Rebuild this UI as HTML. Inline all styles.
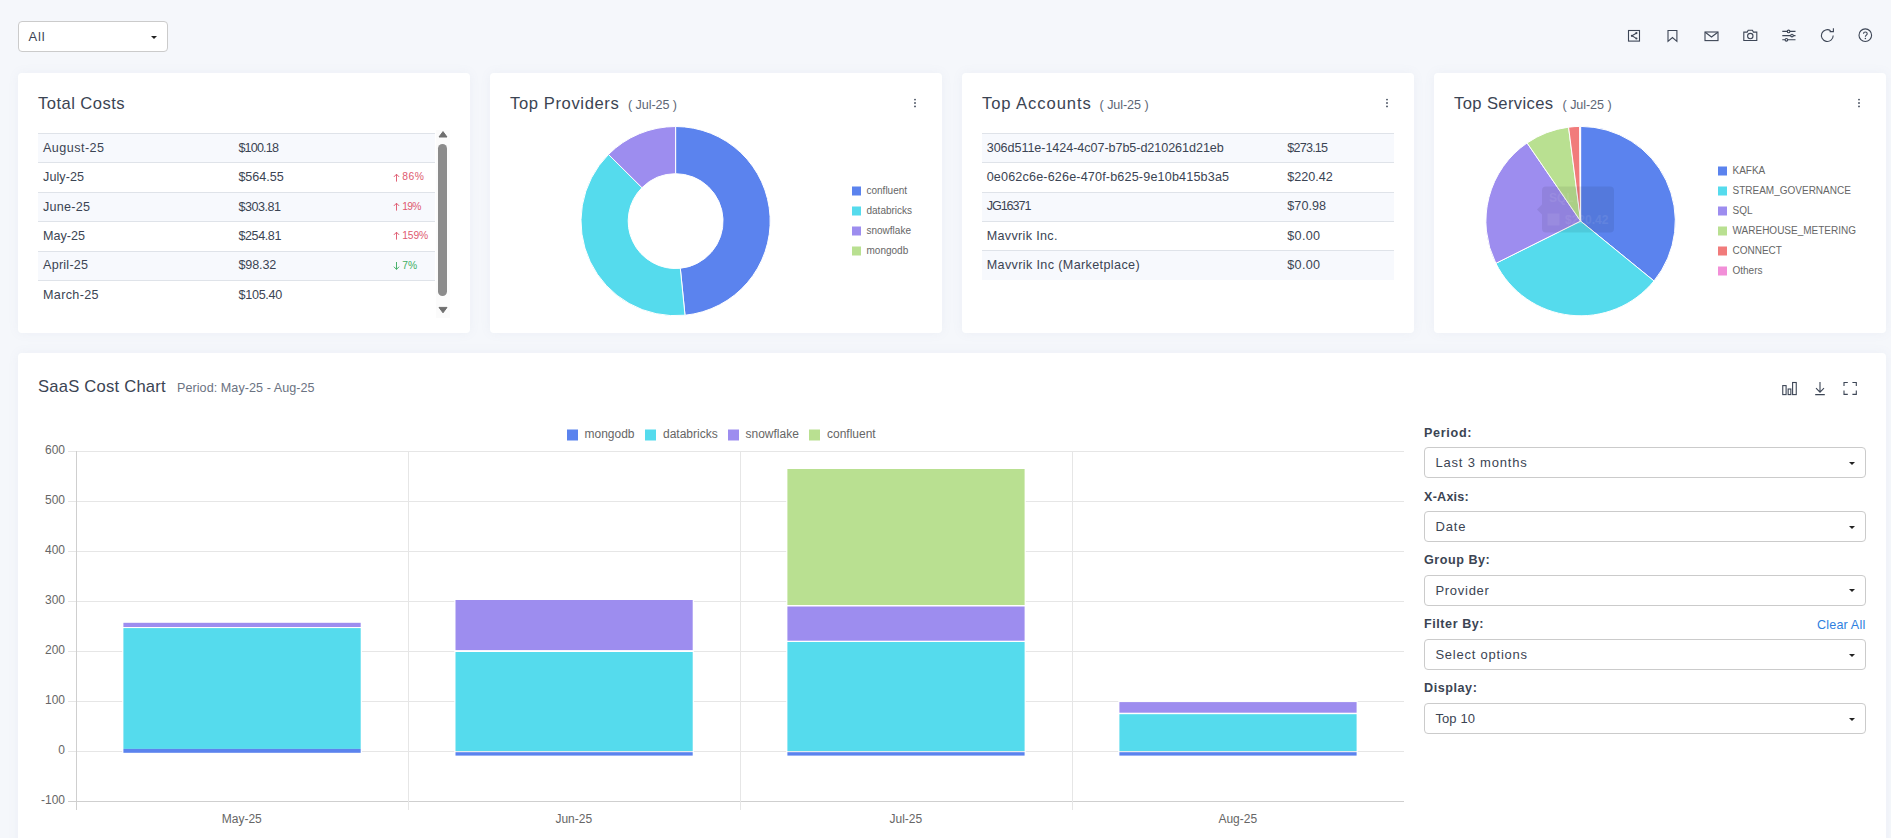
<!DOCTYPE html>
<html><head><meta charset="utf-8"><title>SaaS Costs</title>
<style>
*{box-sizing:border-box;margin:0;padding:0}
html,body{width:1891px;height:838px;overflow:hidden;background:#f5f7fb;font-family:"Liberation Sans",sans-serif;color:#3b4453}
.abs{position:absolute}
.card{position:absolute;background:#fff;border-radius:4px;box-shadow:0 0 11px rgba(125,140,175,0.075)}
.h{position:absolute;font-size:16.6px;line-height:20px;color:#3b4453;white-space:nowrap}
.sub{position:absolute;font-size:12.6px;line-height:16px;color:#5d6675;white-space:nowrap}
.row{position:absolute;height:29.4px;border-top:1px solid #dfe3e9}
.row.odd{background:#f7f9fd}
.c{position:absolute;top:-0.3px;line-height:28.4px;font-size:12.6px;color:#3b4453;white-space:nowrap}
.pct{position:absolute;top:0;height:28.4px;line-height:28.4px;font-size:10.3px;white-space:nowrap}
.pct .ar{font-style:normal;font-size:11px;margin-right:1px}
.up{color:#de5a70} .dn{color:#3fae63}
.ct{font-family:"Liberation Sans",sans-serif;font-size:12px;fill:#666}
.lt{font-family:"Liberation Sans",sans-serif;font-size:10px;fill:#666}
.sel{position:absolute;background:#fff;border:1px solid #cbcbcb;border-radius:4px}
.st{position:absolute;top:0;bottom:0;display:flex;align-items:center;font-size:13px;color:#3b4453;white-space:nowrap}
.caret{position:absolute;right:10px;top:50%;margin-top:-1px;border-left:3.5px solid transparent;border-right:3.5px solid transparent;border-top:3.5px solid #222}
.lab{position:absolute;font-size:12.6px;font-weight:bold;color:#3b4453;white-space:nowrap;line-height:16px}
</style></head><body>

<!-- top bar -->
<div class="sel" style="left:18px;top:21px;width:150px;height:31px"><span class="st" style="left:9.6px"><span style="letter-spacing:0.775px;">All</span></span><i class="caret"></i></div>
<svg class="abs" style="left:1626px;top:28px" width="16" height="16" viewBox="0 0 16 16"><rect x="2.5" y="2.5" width="11" height="10.6" stroke="#3d4656" fill="none" stroke-width="1.1"/><path d="M10.2 5.2L6 7.8L10.2 10.4" stroke="#3d4656" fill="none" stroke-width="1.1"/><circle cx="10.4" cy="5.1" r="1.1" fill="#3d4656"/><circle cx="5.9" cy="7.8" r="1.1" fill="#3d4656"/><circle cx="10.4" cy="10.5" r="1.1" fill="#3d4656"/></svg><svg class="abs" style="left:1664px;top:28px" width="16" height="16" viewBox="0 0 16 16"><path d="M4 2.5H12.9V13.3L8.45 9.5L4 13.3Z" stroke="#3d4656" fill="none" stroke-width="1.1" stroke-linejoin="miter"/></svg><svg class="abs" style="left:1703px;top:28px" width="17" height="16" viewBox="0 0 17 16"><rect x="2" y="4" width="13" height="8.6" stroke="#3d4656" fill="none" stroke-width="1.1"/><path d="M2.2 4.3L8.5 9L14.8 4.3" stroke="#3d4656" fill="none" stroke-width="1.1"/></svg><svg class="abs" style="left:1742px;top:28px" width="17" height="16" viewBox="0 0 17 16"><path d="M1.8 4.1H5.2L6.2 2.3H10.4L11.4 4.1H14.8V12.5H1.8Z" stroke="#3d4656" fill="none" stroke-width="1.1"/><circle cx="8.3" cy="8.1" r="2.7" stroke="#3d4656" fill="none" stroke-width="1.1"/></svg><svg class="abs" style="left:1781px;top:28px" width="16" height="16" viewBox="0 0 16 16"><path d="M1.3 3.4H14.5M1.3 7.6H14.5M1.3 11.8H14.5" stroke="#3d4656" fill="none" stroke-width="1.1"/><circle cx="7.6" cy="3.4" r="1.3" fill="#f5f7fb" stroke="#3d4656"  stroke-width="1.1"/><circle cx="11" cy="7.6" r="1.3" fill="#f5f7fb" stroke="#3d4656"  stroke-width="1.1"/><circle cx="5.4" cy="11.8" r="1.3" fill="#f5f7fb" stroke="#3d4656"  stroke-width="1.1"/></svg><svg class="abs" style="left:1819px;top:27px" width="17" height="17" viewBox="0 0 17 17"><path d="M14.2 8.6A5.9 5.9 0 1 1 11.6 3.7" stroke="#3d4656" fill="none" stroke-width="1.1"/><path d="M10.6 4.6H14.4V1.2" stroke="#3d4656" fill="none" stroke-width="1.1"/></svg><svg class="abs" style="left:1857px;top:27px" width="17" height="17" viewBox="0 0 17 17"><circle cx="8.3" cy="8.2" r="6.3" stroke="#3d4656" fill="none" stroke-width="1.1"/><path d="M6.5 6.7C6.5 4.5 10.2 4.5 10.2 6.7C10.2 8 8.35 8.2 8.35 9.7" stroke="#3d4656" fill="none" stroke-width="1.1"/><circle cx="8.35" cy="11.4" r="0.75" fill="#3d4656"/></svg>

<!-- cards -->
<div class="card" style="left:18px;top:73px;width:452px;height:260px"></div>
<div class="card" style="left:490px;top:73px;width:452px;height:260px"></div>
<div class="card" style="left:962px;top:73px;width:452px;height:260px"></div>
<div class="card" style="left:1434px;top:73px;width:452px;height:260px"></div>
<div class="card" style="left:18px;top:353px;width:1868px;height:500px"></div>

<!-- Total Costs -->
<div class="h" style="left:38px;top:94px"><span style="letter-spacing:0.449px;">Total Costs</span></div>
<div class="row odd" style="left:38px;top:133.0px;width:397px"><span class="c" style="left:5px"><span style="letter-spacing:0.458px;">August-25</span></span><span class="c" style="left:200.4px"><span style="letter-spacing:-0.824px;">$100.18</span></span></div><div class="row" style="left:38px;top:162.4px;width:397px"><span class="c" style="left:5px"><span style="letter-spacing:0.080px;">July-25</span></span><span class="c" style="left:200.4px"><span style="letter-spacing:-0.024px;">$564.55</span></span><span class="pct" style="left:355px;width:40px;color:#de5a70"><svg style="position:absolute;left:0;top:9.2px" width="7" height="10" viewBox="0 0 7 10"><path d="M3.5 8.6V1.2M0.9 3.9L3.5 1.2L6.1 3.9" fill="none" stroke="#de5a70" stroke-width="0.95"/></svg><span style="position:absolute;left:9.2px;top:0"><span style="letter-spacing:0.592px;">86%</span></span></span></div><div class="row odd" style="left:38px;top:191.8px;width:397px"><span class="c" style="left:5px"><span style="letter-spacing:0.261px;">June-25</span></span><span class="c" style="left:200.4px"><span style="letter-spacing:-0.474px;">$303.81</span></span><span class="pct" style="left:355px;width:40px;color:#de5a70"><svg style="position:absolute;left:0;top:9.2px" width="7" height="10" viewBox="0 0 7 10"><path d="M3.5 8.6V1.2M0.9 3.9L3.5 1.2L6.1 3.9" fill="none" stroke="#de5a70" stroke-width="0.95"/></svg><span style="position:absolute;left:9.2px;top:0"><span style="letter-spacing:-0.658px;">19%</span></span></span></div><div class="row" style="left:38px;top:221.2px;width:397px"><span class="c" style="left:5px"><span style="letter-spacing:0.017px;">May-25</span></span><span class="c" style="left:200.4px"><span style="letter-spacing:-0.408px;">$254.81</span></span><span class="pct" style="left:355px;width:40px;color:#de5a70"><svg style="position:absolute;left:0;top:9.2px" width="7" height="10" viewBox="0 0 7 10"><path d="M3.5 8.6V1.2M0.9 3.9L3.5 1.2L6.1 3.9" fill="none" stroke="#de5a70" stroke-width="0.95"/></svg><span style="position:absolute;left:9.2px;top:0"><span style="letter-spacing:-0.082px;">159%</span></span></span></div><div class="row odd" style="left:38px;top:250.6px;width:397px"><span class="c" style="left:5px"><span style="letter-spacing:0.240px;">April-25</span></span><span class="c" style="left:200.4px"><span style="letter-spacing:-0.128px;">$98.32</span></span><span class="pct" style="left:355px;width:40px;color:#3fae63"><svg style="position:absolute;left:0;top:9.2px" width="7" height="10" viewBox="0 0 7 10"><path d="M3.5 1V8.4M0.9 5.7L3.5 8.4L6.1 5.7" fill="none" stroke="#3fae63" stroke-width="0.95"/></svg><span style="position:absolute;left:9.2px;top:0"><span style="letter-spacing:0.013px;">7%</span></span></span></div><div class="row" style="left:38px;top:280.0px;width:397px"><span class="c" style="left:5px"><span style="letter-spacing:0.340px;">March-25</span></span><span class="c" style="left:200.4px"><span style="letter-spacing:-0.258px;">$105.40</span></span></div>
<div class="abs" style="left:436px;top:130px;width:14px;height:188px;background:#fbfbfb"></div>
<div class="abs" style="left:438.4px;top:144px;width:8.6px;height:151.6px;border-radius:5px;background:#8b8b8b"></div>
<svg class="abs" style="left:437px;top:129px" width="12" height="10" viewBox="0 0 12 10"><path d="M2 8L6 2.6L10 8Z" fill="#6e6e6e" stroke="#6e6e6e" stroke-linejoin="round" stroke-width="1"/></svg>
<svg class="abs" style="left:437px;top:305px" width="12" height="10" viewBox="0 0 12 10"><path d="M2 2.4L6 7.8L10 2.4Z" fill="#6e6e6e" stroke="#6e6e6e" stroke-linejoin="round" stroke-width="1"/></svg>

<!-- Top Providers -->
<div class="h" style="left:510px;top:94px"><span style="letter-spacing:0.609px;">Top Providers</span></div>
<div class="sub" style="left:628px;top:97px"><span style="letter-spacing:-0.079px;">( Jul-25 )</span></div>
<svg class="abs" style="left:912px;top:97px" width="6" height="12" viewBox="0 0 6 12"><circle cx="3" cy="2.6" r="0.95" fill="#4a5363"/><circle cx="3" cy="6" r="0.95" fill="#4a5363"/><circle cx="3" cy="9.4" r="0.95" fill="#4a5363"/></svg>

<!-- Top Accounts -->
<div class="h" style="left:982px;top:94px"><span style="letter-spacing:0.915px;">Top Accounts</span></div>
<div class="sub" style="left:1099.6px;top:97px"><span style="letter-spacing:-0.079px;">( Jul-25 )</span></div>
<svg class="abs" style="left:1384px;top:97px" width="6" height="12" viewBox="0 0 6 12"><circle cx="3" cy="2.6" r="0.95" fill="#4a5363"/><circle cx="3" cy="6" r="0.95" fill="#4a5363"/><circle cx="3" cy="9.4" r="0.95" fill="#4a5363"/></svg>
<div class="row odd" style="left:982px;top:133.0px;width:412px"><span class="c" style="left:4.7px"><span style="letter-spacing:-0.062px;">306d511e-1424-4c07-b7b5-d210261d21eb</span></span><span class="c" style="left:305.3px"><span style="letter-spacing:-0.791px;">$273.15</span></span></div><div class="row" style="left:982px;top:162.3px;width:412px"><span class="c" style="left:4.7px"><span style="letter-spacing:0.162px;">0e062c6e-626e-470f-b625-9e10b415b3a5</span></span><span class="c" style="left:305.3px"><span style="letter-spacing:-0.008px;">$220.42</span></span></div><div class="row odd" style="left:982px;top:191.6px;width:412px"><span class="c" style="left:4.7px"><span style="letter-spacing:-1.056px;">JG16371</span></span><span class="c" style="left:305.3px"><span style="letter-spacing:0.052px;">$70.98</span></span></div><div class="row" style="left:982px;top:220.9px;width:412px"><span class="c" style="left:4.7px"><span style="letter-spacing:0.326px;">Mavvrik Inc.</span></span><span class="c" style="left:305.3px"><span style="letter-spacing:0.317px;">$0.00</span></span></div><div class="row odd" style="left:982px;top:250.2px;width:412px"><span class="c" style="left:4.7px"><span style="letter-spacing:0.365px;">Mavvrik Inc (Marketplace)</span></span><span class="c" style="left:305.3px"><span style="letter-spacing:0.317px;">$0.00</span></span></div>

<!-- Top Services -->
<div class="h" style="left:1454px;top:94px"><span style="letter-spacing:0.379px;">Top Services</span></div>
<div class="sub" style="left:1562.6px;top:97px"><span style="letter-spacing:-0.079px;">( Jul-25 )</span></div>
<svg class="abs" style="left:1856px;top:97px" width="6" height="12" viewBox="0 0 6 12"><circle cx="3" cy="2.6" r="0.95" fill="#4a5363"/><circle cx="3" cy="6" r="0.95" fill="#4a5363"/><circle cx="3" cy="9.4" r="0.95" fill="#4a5363"/></svg>

<!-- SaaS Cost Chart header -->
<div class="h" style="left:38px;top:377px"><span style="letter-spacing:0.225px;">SaaS Cost Chart</span></div>
<div class="sub" style="left:177px;top:380px;color:#6b7382"><span style="letter-spacing:0.051px;">Period: May-25 - Aug-25</span></div>
<svg class="abs" style="left:1781px;top:380px" width="17" height="17" viewBox="0 0 17 17"><rect x="1.75" y="5.6" width="3.35" height="9" stroke="#3d4656" fill="none" stroke-width="1.1"/><rect x="7.15" y="9" width="2.7" height="5.6" stroke="#3d4656" fill="none" stroke-width="1.1"/><rect x="11.6" y="2.5" width="3.65" height="12.1" stroke="#3d4656" fill="none" stroke-width="1.1"/></svg><svg class="abs" style="left:1812px;top:380px" width="17" height="17" viewBox="0 0 17 17"><path d="M8 2V12M4 8.2L8 12.2L12 8.2M3.2 14.6H12.8" stroke="#3d4656" fill="none" stroke-width="1.1"/></svg><svg class="abs" style="left:1842px;top:380px" width="17" height="17" viewBox="0 0 17 17"><path d="M2 6V2.5H5.8M10.4 2.5H14.3V6M14.3 10.6V14.4H10.4M5.8 14.4H2V10.6" stroke="#3d4656" fill="none" stroke-width="1.1"/></svg>

<!-- all chart graphics -->
<svg class="abs" style="left:0;top:0" width="1891" height="838" viewBox="0 0 1891 838">
<path d="M675.60 126.50A94.6 94.6 0 0 1 685.00 315.23L680.31 268.27A47.4 47.4 0 0 0 675.60 173.70Z" fill="#5b83ee" stroke="#fff" stroke-width="1.0" stroke-linejoin="round"/><path d="M685.00 315.23A94.6 94.6 0 0 1 608.47 154.44L641.97 187.70A47.4 47.4 0 0 0 680.31 268.27Z" fill="#55dbed" stroke="#fff" stroke-width="1.0" stroke-linejoin="round"/><path d="M608.47 154.44A94.6 94.6 0 0 1 675.60 126.50L675.60 173.70A47.4 47.4 0 0 0 641.97 187.70Z" fill="#9d8def" stroke="#fff" stroke-width="1.0" stroke-linejoin="round"/>
<rect x="852" y="186.5" width="9" height="9" fill="#5b83ee"/><text x="866.5" y="194.4" class="lt">confluent</text><rect x="852" y="206.5" width="9" height="9" fill="#55dbed"/><text x="866.5" y="214.4" class="lt">databricks</text><rect x="852" y="226.5" width="9" height="9" fill="#9d8def"/><text x="866.5" y="234.4" class="lt">snowflake</text><rect x="852" y="246.5" width="9" height="9" fill="#b9e091"/><text x="866.5" y="254.4" class="lt">mongodb</text>
<path d="M1580.60 221.10L1580.60 126.40A94.7 94.7 0 0 1 1653.99 280.95Z" fill="#5b83ee" stroke="#fff" stroke-width="1.0" stroke-linejoin="round"/><path d="M1580.60 221.10L1653.99 280.95A94.7 94.7 0 0 1 1495.85 263.35Z" fill="#55dbed" stroke="#fff" stroke-width="1.0" stroke-linejoin="round"/><path d="M1580.60 221.10L1495.85 263.35A94.7 94.7 0 0 1 1527.10 142.96Z" fill="#9d8def" stroke="#fff" stroke-width="1.0" stroke-linejoin="round"/><path d="M1580.60 221.10L1527.10 142.96A94.7 94.7 0 0 1 1568.57 127.17Z" fill="#b9e091" stroke="#fff" stroke-width="1.0" stroke-linejoin="round"/><path d="M1580.60 221.10L1568.57 127.17A94.7 94.7 0 0 1 1579.61 126.41Z" fill="#f17b7b" stroke="#fff" stroke-width="1.0" stroke-linejoin="round"/><path d="M1580.60 221.10L1579.61 126.41A94.7 94.7 0 0 1 1580.60 126.40Z" fill="#f28fd8" stroke="#fff" stroke-width="1.0" stroke-linejoin="round"/>
<rect x="1718" y="166.5" width="9" height="9" fill="#5b83ee"/><text x="1732.5" y="174.4" class="lt">KAFKA</text><rect x="1718" y="186.5" width="9" height="9" fill="#55dbed"/><text x="1732.5" y="194.4" class="lt">STREAM_GOVERNANCE</text><rect x="1718" y="206.5" width="9" height="9" fill="#9d8def"/><text x="1732.5" y="214.4" class="lt">SQL</text><rect x="1718" y="226.5" width="9" height="9" fill="#b9e091"/><text x="1732.5" y="234.4" class="lt">WAREHOUSE_METERING</text><rect x="1718" y="246.5" width="9" height="9" fill="#f17b7b"/><text x="1732.5" y="254.4" class="lt">CONNECT</text><rect x="1718" y="266.5" width="9" height="9" fill="#f28fd8"/><text x="1732.5" y="274.4" class="lt">Others</text>
<g opacity="0.075"><path d="M1546 186.5h64a4 4 0 0 1 4 4v38a4 4 0 0 1 -4 4h-64a4 4 0 0 1 -4 -4v-14l-5 -5l5 -5v-14a4 4 0 0 1 4 -4Z" fill="#000"/></g>
<g opacity="0.075"><text x="1549" y="202" font-family="Liberation Sans" font-weight="bold" font-size="12" fill="#fff">SQL</text><rect x="1547.5" y="213.5" width="12" height="12" fill="#fff"/><text x="1565" y="224" font-family="Liberation Sans" font-weight="bold" font-size="12" fill="#fff">$220.42</text></g>
<line x1="68" x2="1404" y1="451.5" y2="451.5" stroke="#e6e6e6" stroke-width="1"/><line x1="68" x2="1404" y1="501.5" y2="501.5" stroke="#e6e6e6" stroke-width="1"/><line x1="68" x2="1404" y1="551.5" y2="551.5" stroke="#e6e6e6" stroke-width="1"/><line x1="68" x2="1404" y1="601.5" y2="601.5" stroke="#e6e6e6" stroke-width="1"/><line x1="68" x2="1404" y1="651.5" y2="651.5" stroke="#e6e6e6" stroke-width="1"/><line x1="68" x2="1404" y1="701.5" y2="701.5" stroke="#e6e6e6" stroke-width="1"/><line x1="68" x2="1404" y1="751.5" y2="751.5" stroke="#e6e6e6" stroke-width="1"/><line x1="68" x2="1404" y1="801.5" y2="801.5" stroke="#cfcfcf" stroke-width="1"/><line x1="76.5" x2="76.5" y1="451" y2="810" stroke="#cfcfcf" stroke-width="1"/><line x1="408.5" x2="408.5" y1="451" y2="810" stroke="#e6e6e6" stroke-width="1"/><line x1="740.5" x2="740.5" y1="451" y2="810" stroke="#e6e6e6" stroke-width="1"/><line x1="1072.5" x2="1072.5" y1="451" y2="810" stroke="#e6e6e6" stroke-width="1"/><text x="65" y="454.1" text-anchor="end" class="ct">600</text><text x="65" y="504.1" text-anchor="end" class="ct">500</text><text x="65" y="554.1" text-anchor="end" class="ct">400</text><text x="65" y="604.1" text-anchor="end" class="ct">300</text><text x="65" y="654.1" text-anchor="end" class="ct">200</text><text x="65" y="704.1" text-anchor="end" class="ct">100</text><text x="65" y="754.1" text-anchor="end" class="ct">0</text><text x="65" y="804.1" text-anchor="end" class="ct">-100</text><text x="241.8" y="823" text-anchor="middle" class="ct">May-25</text><text x="573.8" y="823" text-anchor="middle" class="ct">Jun-25</text><text x="905.8" y="823" text-anchor="middle" class="ct">Jul-25</text><text x="1237.8" y="823" text-anchor="middle" class="ct">Aug-25</text><rect x="122.2" y="621.8" width="239.7" height="132.0" fill="#fff"/><rect x="123.4" y="622.8" width="237.3" height="4.2" fill="#9d8def"/><rect x="123.4" y="628.1" width="237.3" height="120.8" fill="#55dbed"/><rect x="123.4" y="748.9" width="237.3" height="3.9" fill="#5b83ee"/><rect x="454.3" y="599.0" width="239.6" height="157.6" fill="#fff"/><rect x="455.5" y="751" width="237.2" height="1.2" fill="#e4ecef"/><rect x="455.5" y="600.0" width="237.2" height="50.1" fill="#9d8def"/><rect x="455.5" y="652.0" width="237.2" height="99.0" fill="#55dbed"/><rect x="455.5" y="752.2" width="237.2" height="3.4" fill="#5b83ee"/><rect x="786.2" y="468.0" width="239.6" height="288.6" fill="#fff"/><rect x="787.4" y="751" width="237.2" height="1.2" fill="#e4ecef"/><rect x="787.4" y="469.0" width="237.2" height="136.0" fill="#b9e091"/><rect x="787.4" y="606.5" width="237.2" height="34.2" fill="#9d8def"/><rect x="787.4" y="642.0" width="237.2" height="109.0" fill="#55dbed"/><rect x="787.4" y="752.2" width="237.2" height="3.4" fill="#5b83ee"/><rect x="1118.2" y="701.1" width="239.6" height="55.5" fill="#fff"/><rect x="1119.4" y="751" width="237.2" height="1.2" fill="#e4ecef"/><rect x="1119.4" y="702.1" width="237.2" height="10.6" fill="#9d8def"/><rect x="1119.4" y="714.2" width="237.2" height="36.8" fill="#55dbed"/><rect x="1119.4" y="752.2" width="237.2" height="3.4" fill="#5b83ee"/><rect x="567" y="429.5" width="11" height="11" fill="#5b83ee"/><text x="584.5" y="437.7" class="ct">mongodb</text><rect x="645" y="429.5" width="11" height="11" fill="#55dbed"/><text x="663" y="437.7" class="ct">databricks</text><rect x="728" y="429.5" width="11" height="11" fill="#9d8def"/><text x="745.5" y="437.7" class="ct">snowflake</text><rect x="809" y="429.5" width="11" height="11" fill="#b9e091"/><text x="827" y="437.7" class="ct">confluent</text>
</svg>

<!-- right controls -->
<div class="lab" style="left:1424px;top:424.5px"><span style="letter-spacing:0.683px;">Period:</span></div>
<div class="sel" style="left:1424px;top:447px;width:442px;height:31px"><span class="st" style="left:10.4px"><span style="letter-spacing:0.812px;">Last 3 months</span></span><i class="caret"></i></div>
<div class="lab" style="left:1424px;top:488.5px"><span style="letter-spacing:0.231px;">X-Axis:</span></div>
<div class="sel" style="left:1424px;top:511px;width:442px;height:31px"><span class="st" style="left:10.4px"><span style="letter-spacing:0.880px;">Date</span></span><i class="caret"></i></div>
<div class="lab" style="left:1424px;top:552px"><span style="letter-spacing:0.525px;">Group By:</span></div>
<div class="sel" style="left:1424px;top:574.5px;width:442px;height:31px"><span class="st" style="left:10.4px"><span style="letter-spacing:0.727px;">Provider</span></span><i class="caret"></i></div>
<div class="lab" style="left:1424px;top:616px"><span style="letter-spacing:0.554px;">Filter By:</span></div>
<div class="abs" style="left:1817px;top:616.5px;font-size:12.6px;line-height:16px;color:#2f7fe0;white-space:nowrap"><span style="letter-spacing:0.160px;">Clear All</span></div>
<div class="sel" style="left:1424px;top:639px;width:442px;height:31px"><span class="st" style="left:10.4px"><span style="letter-spacing:0.772px;">Select options</span></span><i class="caret"></i></div>
<div class="lab" style="left:1424px;top:680px"><span style="letter-spacing:0.555px;">Display:</span></div>
<div class="sel" style="left:1424px;top:703px;width:442px;height:31px"><span class="st" style="left:10.4px"><span style="letter-spacing:0.113px;">Top 10</span></span><i class="caret"></i></div>

</body></html>
